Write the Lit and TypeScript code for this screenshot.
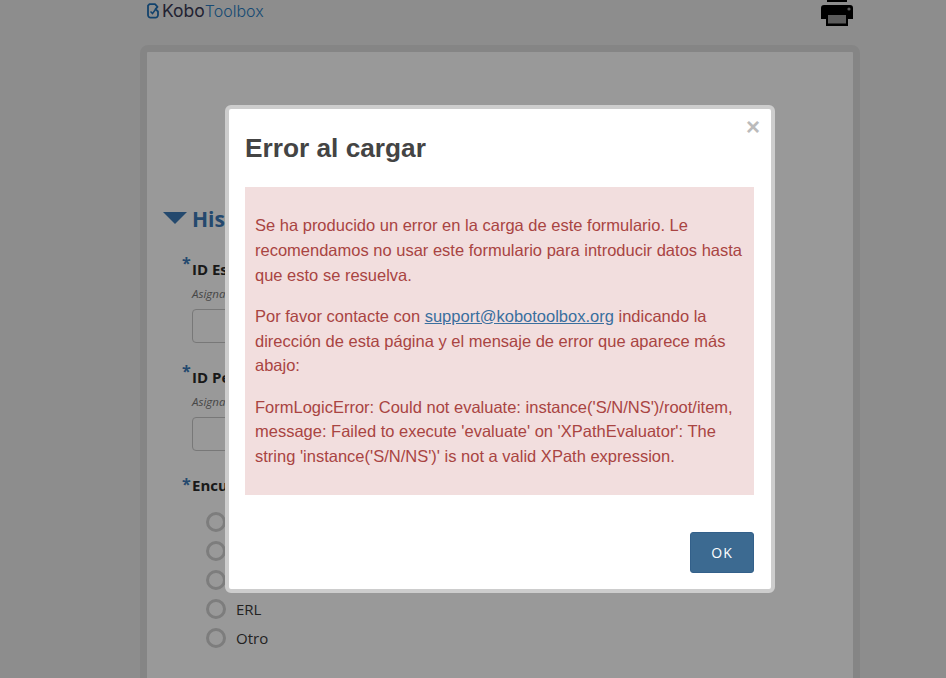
import { LitElement, html, css, svg } from "lit";
import { customElement } from "lit/decorators.js";

const printer = svg`<svg class="printer" viewBox="0 0 32 26" width="32" height="26" aria-hidden="true">
  <rect x="6" y="-3" width="20" height="5" fill="#000"/>
  <path d="M3 5h26a3 3 0 0 1 3 3v11h-5v-5H5v5H0V8a3 3 0 0 1 3-3z" fill="#000"/>
  <circle cx="28" cy="9" r="1.6" fill="#999"/>
  <path d="M5 13h22v13H5z" fill="#000"/>
  <path d="M7 15h18v8.500H7z" fill="#999"/>
</svg>`;

const logoMark = svg`<svg class="mark" viewBox="0 0 12 16" width="12" height="16" aria-hidden="true">
  <path d="M2.500 1.200h5.500l2.500 2.600-2 2.400 2.500 2.300v3.500a2.600 2.600 0 0 1-2.600 2.600H3.600A2.600 2.600 0 0 1 1 12V2.700z" fill="none" stroke="#1f6fb5" stroke-width="1.800" stroke-linejoin="round"/>
  <path d="M3.500 8.500l2 2 3-4" fill="none" stroke="#1f6fb5" stroke-width="1.500"/>
</svg>`;

@customElement("app-root")
export class AppRoot extends LitElement {
  static styles = css`
    :host {
      display: block;
      height: 678px;
      overflow: hidden;
      font-family: "Open Sans", sans-serif;
    }
    .page {
      position: relative;
      width: 1000px;
      height: 678px;
      overflow: hidden;
      background: #ececec;
    }
    .top {
      width: 706px;
      margin: 0 auto;
      height: 45px;
      display: flex;
      justify-content: space-between;
      align-items: flex-start;
    }
    .logo {
      display: flex;
      align-items: center;
      gap: 3px;
      height: 21px;
      font-family: "Inter", sans-serif;
      line-height: 21px;
    }
    .mark {
      flex: none;
    }
    .kobo {
      color: #3a3a55;
      font-size: 17.500px;
      font-weight: 400;
    }
    .toolbox {
      color: #2a7cc0;
      font-size: 16px;
      font-weight: 300;
    }
    .printer {
      display: block;
      overflow: visible;
    }
    .sheet {
      width: 720px;
      height: 640px;
      margin: 0 auto;
      border: 7px solid #dedede;
      border-radius: 8px 8px 0 0;
      background: #fff;
      padding: 152px 0 0 16px;
      box-sizing: border-box;
    }
    .section {
      display: flex;
      align-items: center;
      gap: 5px;
      height: 30px;
      color: #3d7ab8;
      font-size: 21px;
      font-weight: 700;
    }
    .tri {
      width: 0;
      height: 0;
      margin-top: -2px;
      border-left: 12px solid transparent;
      border-right: 12px solid transparent;
      border-top: 12px solid #3d7ab8;
    }
    .q {
      margin-left: 19px;
    }
    .label {
      display: flex;
      align-items: flex-start;
      gap: 2px;
      font-size: 15px;
      font-weight: 700;
      color: #2a2a2a;
      line-height: 20px;
      height: 22px;
    }
    .star {
      color: #3d7ab8;
      font-size: 16px;
      font-weight: 700;
      line-height: 18px;
      width: 8px;
    }
    .raised {
      margin-top: -5px;
    }
    .hint {
      margin-left: 10px;
      font-size: 11.500px;
      font-style: italic;
      color: #777;
      line-height: 16px;
      height: 16px;
      margin-top: 5px;
    }
    .input {
      margin: 7px 0 0 10px;
      width: 200px;
      height: 34px;
      box-sizing: border-box;
      border: 1px solid #c8c8c8;
      border-radius: 4px;
      background: #fff;
    }
    .q1 {
      margin-top: 25px;
    }
    .q2 {
      margin-top: 24px;
    }
    .q3 {
      margin-top: 24px;
    }
    .radios {
      margin: 15px 0 0 24px;
      display: flex;
      flex-direction: column;
      gap: 9px;
    }
    .radio {
      display: flex;
      align-items: center;
      gap: 10px;
      height: 20px;
      font-size: 15px;
      color: #3a3a3a;
    }
    .ring {
      width: 20px;
      height: 20px;
      box-sizing: border-box;
      border: 3px solid #d0d0d0;
      border-radius: 50%;
      background: #fff;
    }
    .overlay {
      position: absolute;
      inset: 0;
      background: rgba(0, 0, 0, 0.4);
      display: flex;
      justify-content: center;
      align-items: flex-start;
      padding-top: 105px;
      box-sizing: border-box;
    }
    .modal {
      position: relative;
      width: 550px;
      height: 488px;
      box-sizing: border-box;
      background: #fff;
      border: 4px solid #cdcdcd;
      border-radius: 6px;
      padding: 0 17px 0 16px;
      font-family: "Liberation Sans", Arial, sans-serif;
      display: flex;
      flex-direction: column;
    }
    .close {
      position: absolute;
      top: 6px;
      right: 11px;
      font-size: 24px;
      line-height: 24px;
      font-weight: 700;
      color: #bbb;
    }
    h2 {
      margin: 22px 0 0;
      font-size: 26.250px;
      line-height: 34px;
      font-weight: 700;
      color: #444;
      height: 56px;
    }
    .alert {
      background: #f2dede;
      color: #a94442;
      padding: 26px 10px 0;
      height: 308px;
      box-sizing: border-box;
      font-size: 16.500px;
      line-height: 24.750px;
    }
    .alert p {
      margin: 0 0 16.500px;
    }
    .alert a {
      color: #3a6f9e;
    }
    .foot {
      display: flex;
      justify-content: flex-end;
      margin-top: 37px;
    }
    .ok {
      width: 64px;
      height: 41px;
      box-sizing: border-box;
      background: #3c6a91;
      border: 1px solid #33608a;
      border-radius: 3px;
      color: #fff;
      font-family: "Open Sans", sans-serif;
      font-size: 14px;
      letter-spacing: 1px;
      padding: 0;
    }
  `;

  render() {
    return html`
      <div class="page">
        <div class="top">
          <div class="logo">${logoMark}<span><span class="kobo">Kobo</span><span class="toolbox">Toolbox</span></span></div>
          ${printer}
        </div>
        <div class="sheet">
          <div class="section"><span class="tri"></span>Hist</div>
          <div class="q q1">
            <div class="label"><span class="star raised">*</span>ID Es</div>
            <div class="hint">Asigna</div>
            <div class="input"></div>
          </div>
          <div class="q q2">
            <div class="label"><span class="star raised">*</span>ID Pe</div>
            <div class="hint">Asigna</div>
            <div class="input"></div>
          </div>
          <div class="q q3">
            <div class="label"><span class="star">*</span>Encu</div>
            <div class="radios">
              <div class="radio"><span class="ring"></span></div>
              <div class="radio"><span class="ring"></span></div>
              <div class="radio"><span class="ring"></span></div>
              <div class="radio"><span class="ring"></span>ERL</div>
              <div class="radio"><span class="ring"></span>Otro</div>
            </div>
          </div>
        </div>
        <div class="overlay">
          <div class="modal">
            <span class="close">×</span>
            <h2>Error al cargar</h2>
            <div class="alert">
              <p>Se ha producido un error en la carga de este formulario. Le recomendamos no usar este formulario para introducir datos hasta que esto se resuelva.</p>
              <p>Por favor contacte con <a href="#">support@kobotoolbox.org</a> indicando la dirección de esta página y el mensaje de error que aparece más abajo:</p>
              <p>FormLogicError: Could not evaluate: instance('S/N/NS')/root/item, message: Failed to execute 'evaluate' on 'XPathEvaluator': The string 'instance('S/N/NS')' is not a valid XPath expression.</p>
            </div>
            <div class="foot"><button class="ok">OK</button></div>
          </div>
        </div>
      </div>
    `;
  }
}
